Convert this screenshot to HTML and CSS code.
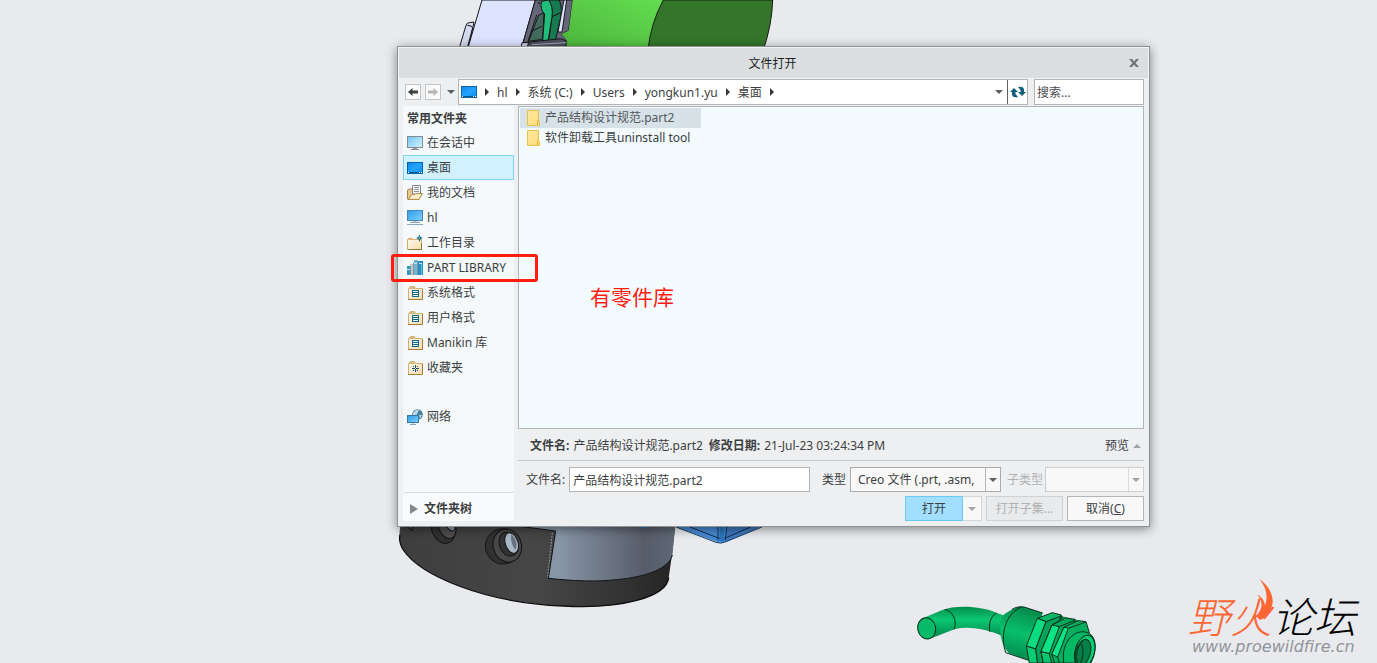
FILE: index.html
```
<!DOCTYPE html>
<html lang="zh-CN">
<head>
  <meta charset="UTF-8">
  <meta name="viewport" content="width=device-width, initial-scale=1.0">
  <title>文件打开</title>
  <link rel="stylesheet" href="styles.css">
</head>
<body>

<!-- shared icons -->
<svg class="defs" width="0" height="0" aria-hidden="true">
  <defs>
    <linearGradient id="blue" x1="0" y1="0" x2="1" y2="1"><stop offset="0" stop-color="#1484e0"/><stop offset=".5" stop-color="#22a4ff"/><stop offset="1" stop-color="#0d8cf0"/></linearGradient>
    <linearGradient id="sky" x1="0" y1="0" x2="1" y2="1"><stop offset="0" stop-color="#6fc4ee"/><stop offset="1" stop-color="#d8f4ff"/></linearGradient>
    <linearGradient id="screen" x1="0" y1="0" x2="1" y2="1"><stop offset="0" stop-color="#2f9be8"/><stop offset="1" stop-color="#7fd0ff"/></linearGradient>
    <linearGradient id="tan" x1="0" y1="0" x2="1" y2="1"><stop offset="0" stop-color="#fffaf0"/><stop offset="1" stop-color="#f7dca8"/></linearGradient>
    <linearGradient id="yellow" x1="0" y1="0" x2="1" y2="1"><stop offset="0" stop-color="#ffe9a2"/><stop offset="1" stop-color="#ffdb78"/></linearGradient>
    <symbol id="i-desktop" viewBox="0 0 16 16">
      <rect x=".5" y="2.5" width="15" height="11" fill="url(#blue)" stroke="#0a64a8"/>
      <path d="M1 12.5h14" stroke="#0b578f"/><path d="M1 12.5h1m10 0h1m1 0h1" stroke="#fff"/>
    </symbol>
    <symbol id="i-session" viewBox="0 0 16 16">
      <rect x=".5" y="1.5" width="15" height="11" fill="url(#sky)" stroke="#7e8c96"/>
      <path d="M6 13h4v1h2v1H4v-1h2z" fill="#8a8f94"/>
    </symbol>
    <symbol id="i-computer" viewBox="0 0 16 16">
      <rect x=".5" y=".5" width="15" height="10" fill="url(#screen)" stroke="#4588b5"/>
      <path d="M6 11h4v1H6z" fill="#b5c4ce"/><path d="M3 12.500h10M0 14.500h16" stroke="#8fa5b5"/>
    </symbol>
    <symbol id="i-docs" viewBox="0 0 16 16">
      <path d="M.5 14V5l2-1h3v9z" fill="#e8c98c" stroke="#a8864e"/>
      <path d="M5.500 9V.5h8V9z" fill="#fff" stroke="#808488"/>
      <path d="M7 2.500h5M7 4.500h5M7 6.500h5" stroke="#8a8d90"/>
      <path d="M1 14.500l4-5h3l1-1h6.500l-3.500 6z" fill="url(#tan)" stroke="#b58c4a"/>
    </symbol>
    <symbol id="i-workdir" viewBox="0 0 16 16">
      <path d="M.5 14.500v-10l1-1h4l1 1h8v10z" fill="url(#tan)" stroke="#d3ae6e"/>
      <path d="M1 4.500h6" stroke="#dfbd80"/><path d="M14.500 8v6.500h-13" fill="none" stroke="#9c7433"/>
      <path d="M12.500-.5l1 2.500L16 3l-2.500 1-1 3-1-3L9 3l2.500-1z" fill="#0d6688"/><path d="M12 2.500h1v1h-1z" fill="#d5f5ff"/>
    </symbol>
    <symbol id="i-library" viewBox="0 0 16 16">
      <path d="M0 6h3v9H0z" fill="#2c9cc4"/><path d="M3 4h4v11H3z" fill="#c2c6ca"/><path d="M7 0h4v15H7z" fill="#6db7d6"/><path d="M11 1h5v14h-5z" fill="#2791c0"/>
      <path d="M3 6h1v9H3zM6 3h1v12H6zM10 2h1v13h-1z" fill="#84919a"/><path d="M0 9h3v1H0zM7 3h3v1H7zM12 3h3v1h-3z" fill="#b8e9f8"/><path d="M14 4h1v11h-1z" fill="#57c0ea"/>
    </symbol>
    <symbol id="i-folder" viewBox="0 0 16 16">
      <path d="M1.500 14.500v-11l2-2h4l1 2h7v11z" fill="url(#tan)" stroke="#d3b070"/>
      <path d="M3 2h5v2H2z" fill="#d9b982"/><path d="M15.500 4v10.500H1" fill="none" stroke="#a07c40"/>
    </symbol>
    <symbol id="i-format" viewBox="0 0 16 16">
      <use href="#i-folder" width="16" height="16"/><path d="M5 5h7v7H5z" fill="#11678a"/><path d="M6 6h5v1H6zM6 8h5v1H6zM6 10h5v1H6z" fill="#eefcff"/>
    </symbol>
    <symbol id="i-favorite" viewBox="0 0 16 16">
      <use href="#i-folder" width="16" height="16"/>
      <path d="M8 5h1v3H8zM8 9h1v3H8zM5 8h3v1H5zM9 8h3v1H9zM6 6h1v1H6zM10 6h1v1h-1zM6 10h1v1H6zM10 10h1v1h-1z" fill="#11566f"/><path d="M8 8h1v1H8z" fill="#c9f0fb"/>
    </symbol>
    <symbol id="i-network" viewBox="0 0 16 16">
      <circle cx="10.500" cy="5.500" r="5.300" fill="#467f9f"/><path d="M6 4q3-4 6-3l-2 4-1 2-3-1zM12 6l3 0-2 4z" fill="#b9d7e6"/>
      <rect x=".5" y="6.500" width="11" height="7" fill="url(#screen)" stroke="#3478a8"/>
      <path d="M3 15.500h6M6 14v1" stroke="#87a3b6"/>
    </symbol>
    <symbol id="i-dir" viewBox="0 0 13 16">
      <path d="M.5.5h11V11l1 1v3.500H.5z" fill="url(#yellow)" stroke="#e9c04d"/><path d="M10.500 15v-4l1-1" fill="none" stroke="#dfae35"/>
    </symbol>
  </defs>
</svg>

<main class="viewport">

  <!-- model parts on the canvas -->
  <svg class="part part-top" viewBox="0 0 1050 150" aria-hidden="true">
    <defs><linearGradient id="g1" x1="0" y1="1" x2="1" y2="0"><stop offset="0" stop-color="#4cb33c"/><stop offset="1" stop-color="#63de50"/></linearGradient></defs>
    <g stroke="#17171c" stroke-width="3">
      <path d="M56 150L78 76Q80 68 88 68L102 66L84 150z" fill="#d4daee"/>
      <path d="M80 150L98 84Q96 76 82 76" fill="none"/>
      <path d="M126 0H286L243 150H82z" fill="#dce3ff"/>
      <path d="M286 0H398L386 92L364 102L380 120V150H243z" fill="#656677"/>
      <path d="M296 45L312 38L308 118L266 124z" fill="#426b5d"/>
      <path d="M272 96L306 78M290 45L264 124" fill="none"/>
      <path d="M294 8L315 14L306 20z" fill="#fff"/>
      <path d="M332 0H358Q370 28 358 70L346 122H326L336 50Q338 18 325 0z" fill="#17794f"/>
      <path d="M304 4L326 0Q340 20 336 50L324 124H308L314 42Q300 30 304 4z" fill="#20bd7b"/>
      <path d="M336 50L362 38" fill="none"/>
      <path d="M372 0H380L366 96H354z" fill="#dfe2fb"/>
      <path d="M250 128L362 116L378 122V150H243z" fill="#50515f"/>
      <path d="M246 128H266L258 150H242z" fill="#d0d5ed"/>
      <path d="M276 134L378 128" fill="none" stroke="#a9acbd"/>
    </g>
    <path d="M398 0H670Q632 70 624 150H380V120L364 102L386 92z" fill="url(#g1)"/>
    <path d="M670 0H998Q996 74 970 150H624Q632 70 670 0z" fill="#33762a" stroke="#171b16" stroke-width="3"/>
  </svg>

  <svg class="part part-base" viewBox="0 0 1200 300" aria-hidden="true">
    <defs>
      <linearGradient id="g2"><stop offset="0" stop-color="#3e3e3e"/><stop offset=".5" stop-color="#464646"/><stop offset=".85" stop-color="#303030"/><stop offset="1" stop-color="#232323"/></linearGradient>
      <linearGradient id="g3"><stop offset="0" stop-color="#8795a6"/><stop offset=".25" stop-color="#8795a6"/><stop offset=".8" stop-color="#575c69"/><stop offset="1" stop-color="#5e6876"/></linearGradient>
    </defs>
    <path d="M34 20Q20 75 40 105C90 180 280 264 520 273C700 283 830 245 836 188L846 120L857 20z" fill="url(#g2)"/>
    <path d="M30 60Q25 80 40 105C90 180 280 264 520 273C700 283 830 245 836 188" fill="none" stroke="#0e0e0e" stroke-width="4"/>
    <path d="M390 20V34L497 48L475 190C550 198 620 201 680 194C770 186 838 160 847 120L857 20z" fill="url(#g3)"/>
    <path d="M390 34L497 48L475 190C550 198 620 201 680 194C770 186 838 160 847 120" fill="none" stroke="#121417" stroke-width="3"/>
    <path d="M487 54L473 186" stroke="#c3cbd4" stroke-width="2" stroke-dasharray="5 4"/>
    <g fill="none" stroke="#151515" stroke-width="3">
      <ellipse cx="160" cy="36" rx="36" ry="50" fill="#303030" transform="rotate(-15 160 36)"/>
      <ellipse cx="170" cy="30" rx="26" ry="42" fill="#4e4e4e" transform="rotate(-20 170 30)"/>
      <ellipse cx="180" cy="28" rx="12" ry="22" fill="#8e99a6" transform="rotate(-30 180 28)"/>
      <ellipse cx="340" cy="94" rx="54" ry="53" fill="#303030"/>
      <ellipse cx="352" cy="92" rx="42" ry="50" fill="#484848" transform="rotate(-16 352 92)"/>
      <ellipse cx="356" cy="87" rx="28" ry="37" fill="#323232" transform="rotate(-18 356 87)"/>
      <ellipse cx="365" cy="84" rx="19" ry="32" fill="#a9b8c8" transform="rotate(-18 365 84)"/>
      <path d="M364 58Q386 78 377 105Q360 86 364 58z" fill="#67717f" stroke="none"/>
      <path d="M52 36L68 48L70 36"/>
    </g>
    <path d="M750 28H780Q770 44 756 38z" fill="#2872b8"/>
    <path d="M815 20L980 80Q992 86 1008 80L1150 20z" fill="#4689d2"/>
    <path d="M1008 20H1150L1008 80z" fill="#3d78bd"/>
    <path d="M858 36L978 82Q992 88 1008 80L1116 36" fill="none" stroke="#173d6b" stroke-width="3"/>
    <path d="M900 36L982 68Q992 73 1008 68L1082 36M984 36V76M1010 36L1006 76" fill="none" stroke="#122d50" stroke-width="3"/>
    <path d="M990 36H1003V76Q996 82 988 76z" fill="#2875bd"/>
  </svg>

  <svg class="part part-gland" viewBox="0 0 660 219" aria-hidden="true">
    <defs>
      <linearGradient id="g4" x1="0" y1="0" x2="0" y2="1"><stop offset="0" stop-color="#058d4c"/><stop offset=".4" stop-color="#0ac771"/><stop offset="1" stop-color="#03834a"/></linearGradient>
      <linearGradient id="g5" x1=".4" y1="0" x2=".2" y2="1"><stop offset="0" stop-color="#078c4c"/><stop offset=".45" stop-color="#08bf6b"/><stop offset="1" stop-color="#03824a"/></linearGradient>
    </defs>
    <path d="M70 84L125 61C170 43 250 50 290 69L325 80L306 137C270 122 215 106 165 117L88 147z" fill="url(#g4)"/>
    <g stroke="#07301e" stroke-width="3" fill="none">
      <ellipse cx="80" cy="115" rx="27" ry="32" fill="#07ba68" transform="rotate(-12 80 115)"/>
      <path d="M134 59C160 61 172 96 162 118M290 69C270 78 265 108 270 126"/>
      <path d="M299 110Q299 76 328 63Q350 48 372 51L428 69L386 211L327 190Q302 168 299 110z" fill="url(#g5)" stroke="none"/>
      <path d="M365 51C315 70 300 135 317 188M335 59Q350 48 372 51L428 69M317 188L386 211"/>
      <path d="M438 95L484 78L540 92V219H400L379 168z" fill="#049a53" stroke="none"/>
      <path d="M412 85L457 68L484 75L486 84L438 95z" fill="#06b765"/>
      <path d="M412 85L438 95L407 177L379 168z" fill="#09db7f"/><path d="M379 168L407 177L413 219H388z" fill="#08cc74"/>
      <path d="M438 95L484 78L478 92L456 105L423 185L430 219H413L407 177z" fill="#04a258"/>
      <path d="M456 105L496 84L526 88L510 125L470 219H430L423 185z" fill="#04a759"/>
      <path d="M456 105L478 110L448 191L423 185z" fill="#0be485"/><path d="M423 185L448 191L455 219H430z" fill="#08c66f"/>
      <path d="M478 110L524 91"/>
      <path d="M492 111L535 92L558 95L568 128L516 219H464L455 193z" fill="#05ad5e"/>
      <path d="M492 111L505 115L473 201L455 193z" fill="#0be485"/><path d="M505 115L558 96M473 201L478 219"/>
      <path d="M490 194C493 145 535 110 570 132C593 147 588 194 572 219H491z" fill="#05b864"/>
      <ellipse cx="554" cy="185" rx="29" ry="50" fill="#08d277" transform="rotate(15 554 185)"/>
      <ellipse cx="549" cy="188" rx="22" ry="41" fill="#047e45" transform="rotate(15 549 188)"/>
      <path d="M550 150Q522 180 532 219M545 163Q554 188 542 219"/>
    </g>
  </svg>

  <section class="dialog" role="dialog" aria-labelledby="dlg-title">
    <header class="titlebar">
      <h1 id="dlg-title">文件打开</h1>
      <button class="close" type="button" aria-label="关闭"><svg width="10" height="10" viewBox="0 0 10 10"><path d="M0 1h3L5 3.500 7 1h3L6.500 5 10 9H7L5 6.500 3 9H0l3.500-4z" fill="#6e7274"/></svg></button>
    </header>

    <div class="toolbar">
      <button class="nav" type="button" aria-label="后退"><svg width="10" height="8" viewBox="0 0 10 8"><path d="M0 4l4.500-4v2.500H10v3H4.500V8z" fill="#3e4143"/></svg></button>
      <button class="nav" type="button" aria-label="前进" disabled><svg width="10" height="8" viewBox="0 0 10 8"><path d="M10 4L5.500 0v2.500H0v3h5.500V8z" fill="#b4b7b9"/></svg></button>
      <button class="history" type="button" aria-label="最近位置"><i class="down"></i></button>
      <nav class="path">
        <svg class="icon"><use href="#i-desktop"/></svg>
        <i class="right"></i><a href="#">hl</a>
        <i class="right"></i><a href="#">系统 (C:)</a>
        <i class="right"></i><a href="#">Users</a>
        <i class="right"></i><a href="#">yongkun1.yu</a>
        <i class="right"></i><a href="#">桌面</a>
        <i class="right"></i>
        <button class="path-drop" type="button" aria-label="历史路径"><i class="down"></i></button>
        <button class="refresh" type="button" aria-label="刷新"><svg width="16" height="12" viewBox="0 0 16 12"><path d="M0 6l4-4 4 4H5.500v2l2.500 3q-5 1-6-2V6zM16 6l-4 4-4-4h2.500V4L8 1q5-1 6 2v3z" fill="#125f80"/></svg></button>
      </nav>
      <input class="search" type="text" placeholder="搜索..." aria-label="搜索">
    </div>

    <div class="body">
      <aside class="sidebar">
        <h2>常用文件夹</h2>
        <ul>
          <li><a href="#"><svg class="icon"><use href="#i-session"/></svg>在会话中</a></li>
          <li><a class="current" href="#"><svg class="icon"><use href="#i-desktop"/></svg>桌面</a></li>
          <li><a href="#"><svg class="icon"><use href="#i-docs"/></svg>我的文档</a></li>
          <li><a href="#"><svg class="icon"><use href="#i-computer"/></svg>hl</a></li>
          <li><a href="#"><svg class="icon"><use href="#i-workdir"/></svg>工作目录</a></li>
          <li><a href="#"><svg class="icon"><use href="#i-library"/></svg>PART LIBRARY</a></li>
          <li><a href="#"><svg class="icon"><use href="#i-format"/></svg>系统格式</a></li>
          <li><a href="#"><svg class="icon"><use href="#i-format"/></svg>用户格式</a></li>
          <li><a href="#"><svg class="icon"><use href="#i-format"/></svg>Manikin 库</a></li>
          <li><a href="#"><svg class="icon"><use href="#i-favorite"/></svg>收藏夹</a></li>
          <li class="network"><a href="#"><svg class="icon"><use href="#i-network"/></svg>网络</a></li>
        </ul>
        <button class="tree" type="button"><i></i>文件夹树</button>
      </aside>

      <div class="content">
        <ul class="files">
          <li><a class="selected" href="#"><svg class="dir"><use href="#i-dir"/></svg>产品结构设计规范.part2</a></li>
          <li><a href="#"><svg class="dir"><use href="#i-dir"/></svg>软件卸载工具uninstall tool</a></li>
        </ul>

        <div class="info">
          <b>文件名:</b><span>产品结构设计规范.part2</span>
          <b>修改日期:</b><span>21-Jul-23 03:24:34 PM</span>
          <button class="preview" type="button">预览<i class="up"></i></button>
        </div>

        <form class="fields">
          <label for="fname">文件名:</label>
          <input id="fname" type="text" value="产品结构设计规范.part2">
          <label for="ftype">类型</label>
          <div class="drop drop-type"><select id="ftype"><option>Creo 文件 (.prt, .asm,</option></select><i class="down"></i></div>
          <label class="off" for="fsub">子类型</label>
          <div class="drop drop-sub off"><select id="fsub" disabled><option></option></select><i class="down"></i></div>
        </form>

        <div class="actions">
          <div class="split">
            <button class="open" type="button">打开</button>
            <button class="open-more" type="button" aria-label="更多打开选项"><i class="down"></i></button>
          </div>
          <button class="btn" type="button" disabled>打开子集...</button>
          <button class="btn" type="button">取消(<u>C</u>)</button>
        </div>
      </div>
    </div>
  </section>

  <!-- mark-up over the dialog -->
  <div class="mark-box"></div>
  <p class="mark-note">有零件库</p>

  <div class="forum">
    <div class="forum-name"><span>野火</span>论坛</div>
    <div class="forum-url">www.proewildfire.cn</div>
    <svg class="flame" viewBox="0 0 54 130" aria-hidden="true"><path d="M14 0C50 28 64 66 44 98Q36 114 16 124L1 112C26 92 24 66 6 46Q28 58 30 80C40 52 34 28 14 0z" fill="#ff6633"/></svg>
  </div>
</main>

</body>
</html>
```
FILE: styles.css
```
*{
box-sizing: border-box;
}

body{
margin: 0;
background-color: #e8eaee;
color: #3c3f41;
font: 12px/20px "Noto Sans", "Noto Sans CJK SC", sans-serif;
}

h1, h2, ul, p{
margin: 0;
padding: 0;
font-size: 12px;
list-style: none;
}

a{
color: inherit;
text-decoration: none;
}

button, input, select{
font: inherit;
color: inherit;
margin: 0;
padding: 0;
border: 1px solid #b2b5b7;
border-radius: 0;
background: none;
}

button{
display: flex;
align-items: center;
justify-content: center;
}

.defs{
position: absolute;
}

.viewport{
position: relative;
min-height: 100vh;
overflow: hidden;
}

/* 3D parts */
.part{
position: absolute;
}

.part-top{
left: 440px;
top: 0;
width: 350px;
height: 50px;
}

.part-base{
left: 390px;
top: 515px;
width: 400px;
height: 100px;
}

.part-gland{
left: 900px;
top: 590px;
width: 220px;
height: 73px;
}

/* arrows */
.down, .up, .right, .tree i{
flex: none;
width: 0;
height: 0;
border: 4px solid transparent;
}

.down{
border-top-color: #5c5f61;
border-bottom: 0;
}

.up{
border-bottom-color: #a0a3a5;
border-top: 0;
}

.right{
border-left-color: #333638;
border-right: 0;
}

.icon{
flex: none;
width: 16px;
height: 16px;
}

/* dialog */
.dialog{
position: absolute;
left: 397px;
top: 46px;
width: 753px;
border: 1px solid #8e9293;
background-color: #eeeff1;
box-shadow: 0 2px 10px rgba(0,0,0,.45);
}

.titlebar{
display: flex;
align-items: center;
height: 32px;
border: 1px solid #f2f4f4;
background-color: #dadede;
color: #1c1e1f;
}

.titlebar h1{
flex: 1;
padding: 2px 0 0 24px;
font-weight: normal;
text-align: center;
}

.close{
width: 24px;
height: 24px;
margin-right: 2px;
border: 0;
}

.toolbar{
display: flex;
align-items: center;
padding: 0 5px 0 7px;
}

.nav{
width: 16px;
height: 16px;
margin-right: 4px;
background-color: #fafafa;
border-color: #c3c6c8;
}

.history{
width: 12px;
height: 24px;
margin-right: 1px;
border: 0;
}

.path{
flex: 1;
display: flex;
align-items: center;
gap: 8px;
height: 26px;
padding-left: 2px;
border: 1px solid #b2b5b7;
background-color: #fff;
}

.path a{
padding-top: 1px;
}

.path-drop{
width: 16px;
height: 24px;
margin: 0 -8px 0 auto;
border: 0;
}

.refresh{
width: 20px;
height: 24px;
border-width: 0 0 0 1px;
border-color: #5e6163;
}

.search{
width: 110px;
height: 26px;
margin-left: 6px;
padding: 0 2px;
background-color: #fff;
}

.search::placeholder{
color: #4a4d4f;
opacity: 1;
}

.body{
display: flex;
gap: 4px;
padding: 1px 5px 5px;
}

/* sidebar */
.sidebar{
flex: none;
width: 111px;
display: flex;
flex-direction: column;
background-color: #f5f9fb;
}

.sidebar h2{
padding: 3px 4px 1px;
}

.sidebar a{
display: flex;
align-items: center;
gap: 4px;
height: 25px;
padding: 0 3px;
border: 1px solid transparent;
white-space: nowrap;
}

.sidebar a.current{
background-color: #d1f1ff;
border-color: #80d3fa;
}

.network{
margin-top: 24px;
}

.tree{
justify-content: flex-start;
gap: 6px;
height: 29px;
margin-top: auto;
padding: 3px 0 0 7px;
border-width: 1px 0 0;
border-color: #d5dfe3;
background-color: #f8fafb;
font-weight: bold;
}

.tree i{
border-width: 5px 0 5px 8px;
border-left-color: #85898b;
}

/* file list and the panel below it */
.content{
flex: 1;
min-width: 0;
}

.files{
height: 323px;
padding: 1px;
border: 1px solid #b2b5b7;
background-color: #f3fbff;
}

.files a{
display: flex;
align-items: center;
gap: 5px;
width: 181px;
height: 20px;
padding-left: 7px;
white-space: nowrap;
}

.files .selected{
background-color: #d6e1e8;
color: #55585a;
}

.dir{
flex: none;
width: 13px;
height: 16px;
}

.info{
display: flex;
align-items: center;
gap: 4px;
height: 32px;
padding: 2px 0 0 12px;
border-bottom: 1px solid #c6c9cb;
}

.info span{
margin-right: 2px;
}

.preview{
gap: 4px;
margin: 0 3px 0 auto;
border: 0;
}

.fields{
display: flex;
align-items: center;
gap: 4px;
padding: 6px 0 4px 8px;
}

.fields label{
white-space: nowrap;
}

.fields input{
flex: 1;
min-width: 0;
height: 25px;
margin-right: 8px;
padding: 0 3px;
background-color: #fff;
}

.drop{
display: flex;
align-items: center;
height: 25px;
border: 1px solid #a9acae;
background-color: #f8f8f8;
}

.drop select{
flex: 1;
min-width: 0;
height: 23px;
padding-left: 7px;
border-width: 0 1px 0 0;
appearance: none;
}

.drop .down{
margin: 0 3px;
}

.drop-type{
width: 151px;
margin-right: 2px;
}

.drop-sub{
width: 99px;
margin-left: -2px;
}

.off{
color: #b0b2b4;
border-color: #cccfd1;
}

.off select{
border-color: #cccfd1;
}

.off .down, .open-more .down{
border-top-color: #a3a6a8;
}

.actions{
display: flex;
justify-content: flex-end;
gap: 4px;
}

.split{
display: flex;
}

.open{
width: 58px;
height: 25px;
border-color: #6cc8f4;
background-color: #a1deff;
}

.open-more{
width: 19px;
height: 25px;
border-width: 1px 1px 1px 0;
border-color: #d5d7d9;
background-color: #f8f8f8;
}

.btn{
width: 77px;
height: 25px;
background-color: #f8f8f8;
}

.btn:disabled{
background-color: #e9eaeb;
border-color: #cfd1d3;
color: #b0b2b4;
}

/* mark-up */
.mark-box{
position: absolute;
left: 391px;
top: 254px;
width: 147px;
height: 28px;
border: 3px solid #ff1d10;
border-radius: 3px;
}

.mark-note{
position: absolute;
left: 590px;
top: 284px;
color: #ff1d10;
font-size: 21px;
line-height: 26px;
}

/* forum logo */
.forum{
position: absolute;
right: 21px;
bottom: 6px;
font-style: italic;
}

.forum-name{
color: #000;
font-family: "Noto Sans CJK SC", sans-serif;
font-size: 42px;
font-weight: 300;
line-height: 44px;
}

.forum-name span{
color: #ff6633;
}

.forum-url{
padding-left: 4px;
color: #929498;
font-family: "DejaVu Sans", "Liberation Sans", sans-serif;
font-size: 16px;
line-height: 20px;
}

.flame{
position: absolute;
left: 67px;
top: -14px;
width: 18px;
height: 43px;
}
```
